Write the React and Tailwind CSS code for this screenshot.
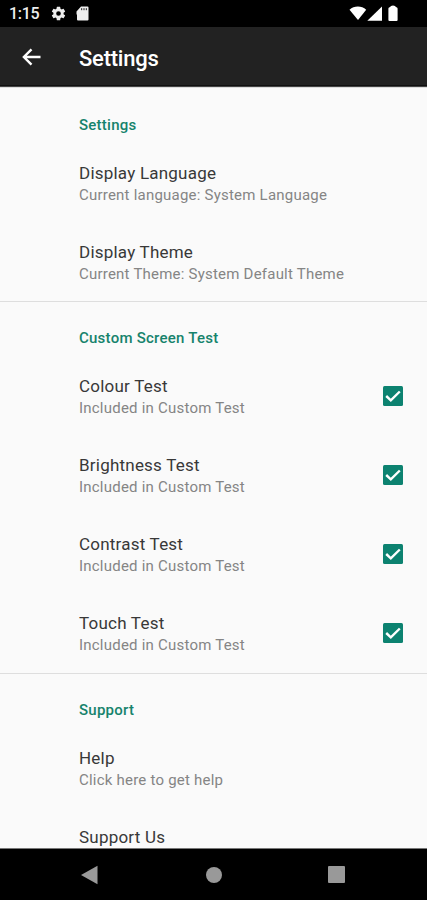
import React from "react";

function Category({ title }) {
  return (
    <h2 className="h-[55px] shrink-0 pt-[26px] pl-[79px] text-[15px] leading-[20px] font-medium tracking-[0.24px] text-[#16836c]">
      {title}
    </h2>
  );
}

function Item({ title, detail, checked }) {
  return (
    <div className="flex h-[79px] shrink-0 items-start justify-between pt-[18px] pr-[24px] pl-[79px]">
      <div className="whitespace-nowrap">
        <div className="text-[17px] leading-[22px] tracking-[0.22px] text-[#383838]">{title}</div>
        {detail && <div className="text-[15px] leading-[22px] tracking-[0.22px] text-[#858585]">{detail}</div>}
      </div>
      {checked && (
        <svg className="mt-[11px]" width="20" height="20" viewBox="0 0 20 20" role="img" aria-label="Included">
          <rect width="20" height="20" rx="1.500" fill="#0c8270" />
          <path d="M3.200 10 7.800 14.300 16.800 5.500" fill="none" stroke="#fff" strokeWidth="2.400" />
        </svg>
      )}
    </div>
  );
}

function StatusBar() {
  return (
    <div className="flex h-[27px] shrink-0 items-center justify-between bg-black pr-[28px] pl-[9px] text-[#eee]">
      <div className="flex items-center">
        <span className="w-[41px] text-[16px] leading-none font-medium tracking-[-0.3px]">1:15</span>
        <svg width="17" height="17" viewBox="0 0 24 24" fill="currentColor">
          <path d="M19.140 12.940c.04-.3.060-.61.060-.94 0-.32-.02-.64-.07-.94l2.030-1.580a.49.490 0 0 0 .12-.61l-1.920-3.320a.49.490 0 0 0-.59-.22l-2.390.96a7 7 0 0 0-1.620-.94l-.36-2.540a.48.480 0 0 0-.48-.41h-3.840a.47.470 0 0 0-.47.410l-.36 2.540c-.59.240-1.130.57-1.620.94l-2.390-.96a.48.480 0 0 0-.59.220L2.740 8.870a.48.480 0 0 0 .12.610l2.030 1.580c-.05.3-.09.630-.09.940s.02.640.07.940l-2.030 1.580a.49.490 0 0 0-.12.610l1.920 3.320c.12.220.37.290.59.220l2.390-.96c.5.380 1.030.7 1.620.940l.36 2.540c.05.240.24.410.48.410h3.840c.24 0 .44-.17.470-.41l.36-2.540c.59-.24 1.130-.56 1.620-.94l2.390.96c.22.080.47 0 .59-.22l1.920-3.320a.47.470 0 0 0-.12-.61zM12 15.300a3.300 3.300 0 1 1 0-6.600 3.300 3.300 0 0 1 0 6.600z" />
        </svg>
        <svg className="ml-[9px]" width="13" height="15" viewBox="0 0 13 15">
          <path d="M5 .5h6.500q1 0 1 1v12q0 1-1 1h-9.500q-1 0-1-1V9L.5 8V5.500z" fill="currentColor" />
          <path d="M5.700 2.200v2M8 2.200v2M10.300 2.200v2" stroke="#000" strokeWidth="0.900" />
        </svg>
      </div>
      <svg width="50" height="17" viewBox="0 0 50 17" fill="#fff">
        <path d="M.5 4.700C5.100.5 12.600.5 17.200 4.700L9 15z" />
        <path d="M33 1.500V15.800H18.300z" />
        <path d="M40 2.600Q41.200 2 42 1q2-.8 4 0 .8 1 2 1.600.6.400.6 1.200v11.200q0 1-1 1h-7.200q-1 0-1-1V3.800q0-.8.600-1.200z" />
      </svg>
    </div>
  );
}

export default function App() {
  return (
    <div className="flex h-[900px] w-[427px] flex-col overflow-hidden bg-[#fafafa] font-[Roboto,sans-serif]">
      <StatusBar />
      <header className="flex h-[60px] shrink-0 items-center border-b border-[#444] bg-[#222] pt-[3px] pl-[20px] text-white shadow-[inset_0_-1px_0_#101010]">
        <svg className="-mt-[3px]" width="22" height="22" viewBox="0 0 22 22" fill="none" stroke="currentColor" strokeWidth="2.400">
          <path d="M20.500 11H4M11.500 3.400 3.900 11l7.600 7.600" />
        </svg>
        <h1 className="ml-[37px] pt-[2px] text-[22px] leading-[28px] font-medium tracking-[-0.23px]">Settings</h1>
      </header>
      <main className="flex min-h-0 flex-1 flex-col overflow-hidden border-t border-[#ddd]">
        <section className="flex h-[214px] shrink-0 flex-col border-b border-[#dedede] pt-px">
          <Category title="Settings" />
          <Item title="Display Language" detail="Current language: System Language" />
          <Item title="Display Theme" detail="Current Theme: System Default Theme" />
        </section>
        <section className="flex shrink-0 flex-col border-b border-[#dedede]">
          <Category title="Custom Screen Test" />
          <Item title="Colour Test" detail="Included in Custom Test" checked />
          <Item title="Brightness Test" detail="Included in Custom Test" checked />
          <Item title="Contrast Test" detail="Included in Custom Test" checked />
          <Item title="Touch Test" detail="Included in Custom Test" checked />
        </section>
        <section className="flex shrink-0 flex-col">
          <Category title="Support" />
          <Item title="Help" detail="Click here to get help" />
          <Item title="Support Us" />
        </section>
      </main>
      <nav className="flex h-[52px] shrink-0 items-center border-t border-[#777] bg-black pl-[80px]">
        <svg width="18" height="20" viewBox="0 0 18 20" fill="#999">
          <path d="M17.500.8V19.200L1 10z" />
        </svg>
        <div className="ml-[108px] size-[16px] rounded-full bg-[#999]" />
        <div className="ml-[106px] size-[17px] rounded-[1px] bg-[#999]" />
      </nav>
    </div>
  );
}
